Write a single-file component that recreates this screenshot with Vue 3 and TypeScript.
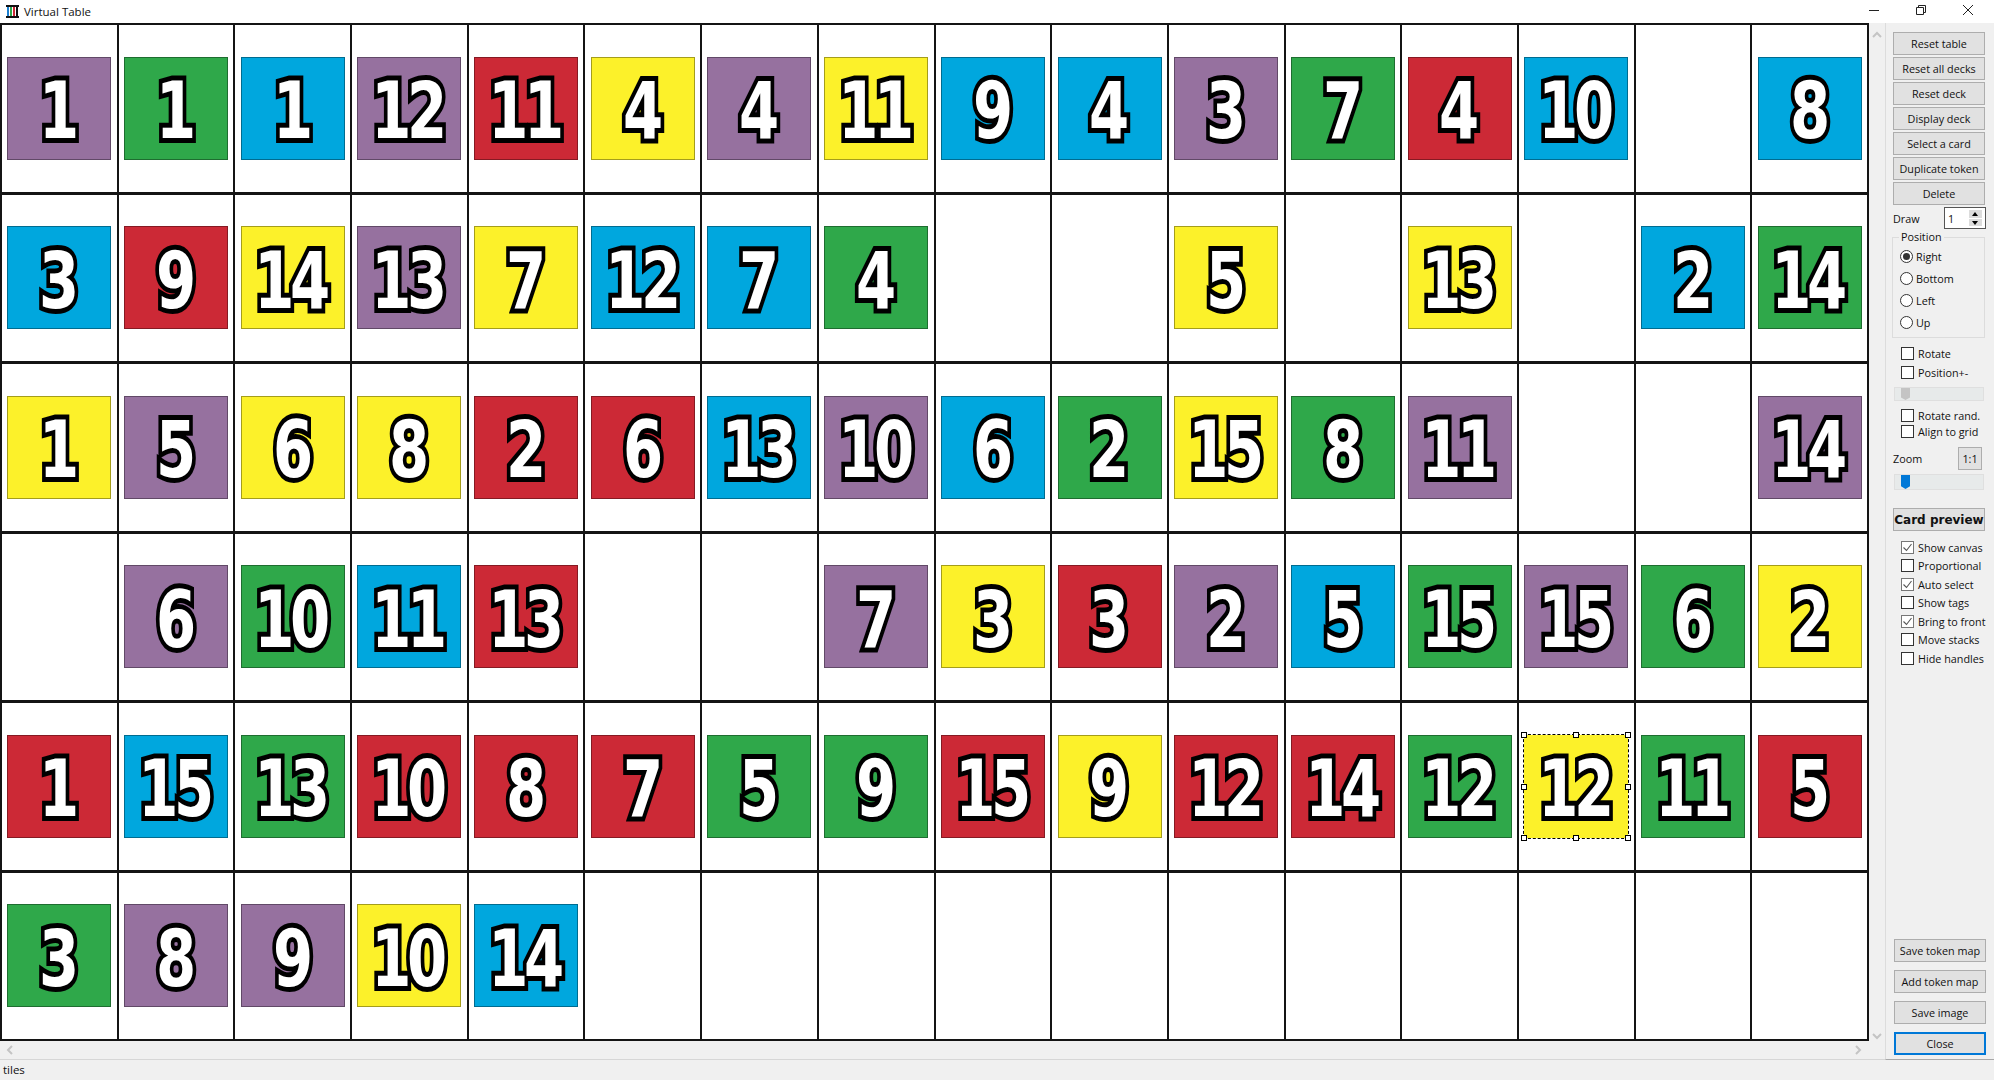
<script setup lang="ts">
type Tile = { c: string; n: number; selected?: boolean } | null

const layout = [
  'p1 g1 b1 p12 r11 y4 p4 y11 b9 b4 p3 g7 r4 b10 _ b8',
  'b3 r9 y14 p13 y7 b12 b7 g4 _ _ y5 _ y13 _ b2 g14',
  'y1 p5 y6 y8 r2 r6 b13 p10 b6 g2 y15 g8 p11 _ _ p14',
  '_ p6 g10 b11 r13 _ _ p7 y3 r3 p2 b5 g15 p15 g6 y2',
  'r1 b15 g13 r10 r8 r7 g5 g9 r15 y9 r12 r14 g12 y12* g11 r5',
  'g3 p8 p9 y10 b14 _ _ _ _ _ _ _ _ _ _ _',
]

const cells: Tile[] = layout.flatMap((row) =>
  row.split(' ').map((t) =>
    t === '_' ? null : { c: t[0], n: parseInt(t.slice(1), 10), selected: t.endsWith('*') },
  ),
)

const handles = ['tl', 'tc', 'tr', 'ml', 'mr', 'bl', 'bc', 'br']
const topButtons = ['Reset table', 'Reset all decks', 'Reset deck', 'Display deck', 'Select a card', 'Duplicate token', 'Delete']
const radios = ['Right', 'Bottom', 'Left', 'Up']
const options = [
  { label: 'Show canvas', on: true },
  { label: 'Proportional', on: false },
  { label: 'Auto select', on: true },
  { label: 'Show tags', on: false },
  { label: 'Bring to front', on: true },
  { label: 'Move stacks', on: false },
  { label: 'Hide handles', on: false },
]
const bottomButtons = ['Save token map', 'Add token map', 'Save image']
</script>

<template>
  <div class="window">
    <header class="titlebar">
      <svg class="app-icon" width="13" height="15" viewBox="0 0 13 15">
        <rect x="0" y="1" width="13" height="2" fill="#111" />
        <rect x="0" y="12" width="13" height="2" fill="#111" />
        <rect x="1" y="3" width="2" height="9" fill="#1a7fd0" />
        <rect x="4" y="3" width="2" height="9" fill="#2fa84a" />
        <rect x="7" y="3" width="2" height="9" fill="#cc2936" />
        <rect x="10" y="3" width="2" height="9" fill="#111" />
      </svg>
      <span class="title">Virtual Table</span>
      <div class="win-controls">
        <svg width="12" height="12" viewBox="0 0 12 12"><path d="M1 6.5h10" stroke="#222" fill="none" /></svg>
        <svg width="12" height="12" viewBox="0 0 12 12"><path d="M1.5 3.5h7v7h-7zM3.5 3.5v-2h7v7h-2" stroke="#222" fill="none" /></svg>
        <svg width="12" height="12" viewBox="0 0 12 12"><path d="M1 1l10 10M11 1L1 11" stroke="#222" fill="none" /></svg>
      </div>
    </header>

    <div class="body">
      <div class="work">
        <div class="work-top">
          <div class="board">
            <div v-for="(cell, i) in cells" :key="i" class="cell">
              <div v-if="cell" class="tile" :class="['c-' + cell.c, { selected: cell.selected }]">
                <span class="num">{{ cell.n }}</span>
                <template v-if="cell.selected">
                  <i v-for="h in handles" :key="h" class="handle" :class="h"></i>
                </template>
              </div>
            </div>
          </div>
          <div class="vscroll">
            <svg width="10" height="7" viewBox="0 0 10 7"><path d="M1 6l4-4 4 4" stroke="#c4c4c4" stroke-width="2" fill="none" /></svg>
            <svg width="10" height="7" viewBox="0 0 10 7"><path d="M1 1l4 4 4-4" stroke="#c4c4c4" stroke-width="2" fill="none" /></svg>
          </div>
        </div>
        <div class="hscroll">
          <svg width="7" height="10" viewBox="0 0 7 10"><path d="M6 1L2 5l4 4" stroke="#c4c4c4" stroke-width="2" fill="none" /></svg>
          <svg width="7" height="10" viewBox="0 0 7 10"><path d="M1 1l4 4-4 4" stroke="#c4c4c4" stroke-width="2" fill="none" /></svg>
        </div>
      </div>

      <aside class="panel">
        <div class="btn-stack">
          <button v-for="b in topButtons" :key="b" class="btn">{{ b }}</button>
        </div>

        <div class="draw-row">
          <span>Draw</span>
          <div class="spin">
            <span>1</span>
            <div class="spin-arrows">
              <i class="arrow up"></i>
              <i class="arrow down"></i>
            </div>
          </div>
        </div>

        <fieldset class="group">
          <legend>Position</legend>
          <label v-for="(r, i) in radios" :key="r" class="radio-row">
            <i class="radio" :class="{ on: i === 0 }"></i>{{ r }}
          </label>
        </fieldset>

        <div class="checks first">
          <label class="check-row"><i class="check"></i>Rotate</label>
          <label class="check-row"><i class="check"></i>Position+-</label>
        </div>

        <div class="slider"><i class="thumb gray"></i></div>

        <div class="checks tight">
          <label class="check-row"><i class="check"></i>Rotate rand.</label>
          <label class="check-row"><i class="check"></i>Align to grid</label>
        </div>

        <div class="zoom-row">
          <span>Zoom</span>
          <button class="btn one">1:1</button>
        </div>
        <div class="slider zoom"><i class="thumb blue"></i></div>

        <button class="btn preview">Card preview</button>

        <div class="checks options">
          <label v-for="o in options" :key="o.label" class="check-row">
            <i class="check" :class="{ on: o.on }">
              <svg v-if="o.on" width="11" height="11" viewBox="0 0 11 11"><path d="M1.5 5.5l3 3 5-6.5" stroke="#555" stroke-width="1.1" fill="none" /></svg>
            </i>{{ o.label }}
          </label>
        </div>

        <div class="bottom">
          <button v-for="b in bottomButtons" :key="b" class="btn">{{ b }}</button>
          <button class="btn focus">Close</button>
        </div>
      </aside>
    </div>

    <footer class="status">tiles</footer>
  </div>
</template>

<style scoped>
.window {
  width: 1994px;
  height: 1080px;
  display: flex;
  flex-direction: column;
  background: #f0f0f0;
  font-family: "Open Sans", "Noto Sans", sans-serif;
  font-size: 10.8px;
  color: #111;
  overflow: hidden;
}
.titlebar {
  height: 23px;
  flex: none;
  background: #fff;
  display: flex;
  align-items: center;
  padding-left: 6px;
}
.title {
  margin-left: 5px;
  font-size: 11.5px;
}
.win-controls {
  margin-left: auto;
  width: 126px;
  margin-top: -4px;
  display: flex;
  justify-content: space-between;
  padding-right: 20px;
  box-sizing: border-box;
}
.body {
  flex: 1;
  min-height: 0;
  display: flex;
}
.work {
  flex: 1;
  min-width: 0;
  display: flex;
  flex-direction: column;
}
.work-top {
  flex: 1;
  min-height: 0;
  display: flex;
}
.board {
  width: 1869px;
  height: 1018px;
  flex: none;
  box-sizing: border-box;
  display: grid;
  grid-template-columns: repeat(16, 1fr);
  grid-template-rows: repeat(6, 1fr);
  gap: 3px 2px;
  padding: 2px;
  background: #141414;
}
.cell {
  background: #fff;
  display: flex;
  align-items: center;
  justify-content: center;
  min-width: 0;
  min-height: 0;
}
.tile {
  position: relative;
  width: 104px;
  height: 103px;
  box-sizing: border-box;
  border: 1px solid rgba(0, 0, 0, 0.35);
  display: flex;
  align-items: center;
  justify-content: center;
  overflow: visible;
}
.c-p { background: #96719f; }
.c-g { background: #2fa84a; }
.c-b { background: #00a7de; }
.c-r { background: #cc2936; }
.c-y { background: #fcf12a; }
.num {
  display: inline-block;
  font-family: "DejaVu Sans", sans-serif;
  font-weight: 700;
  font-size: 78px;
  line-height: 1;
  color: #fff;
  -webkit-text-stroke: 10px #000;
  paint-order: stroke fill;
  transform: scaleX(0.74);
  letter-spacing: -6px;
  text-indent: -6px;
  margin-top: 6px;
}
.tile.selected {
  border: 0;
  outline: 1px dashed #000;
}
.handle {
  position: absolute;
  width: 6px;
  height: 6px;
  box-sizing: border-box;
  background: #fff;
  border: 1px solid #000;
}
.tl, .ml, .bl { left: -3px; }
.tr, .mr, .br { right: -3px; }
.tc, .bc { left: 49px; }
.tl, .tc, .tr { top: -3px; }
.bl, .bc, .br { bottom: -3px; }
.ml, .mr { top: 49px; }

.vscroll {
  flex: 1;
  padding: 8px 0 20px;
  display: flex;
  flex-direction: column;
  align-items: center;
  justify-content: space-between;
  box-sizing: border-box;
  height: 1037px;
}
.hscroll {
  height: 18px;
  flex: none;
  display: flex;
  align-items: center;
  justify-content: space-between;
  padding: 0 23px 0 6px;
  border-bottom: 1px solid #d6d6d6;
}
.panel {
  width: 109px;
  flex: none;
  box-sizing: border-box;
  border-left: 1px solid #dcdcdc;
  border-bottom: 1px solid #a8a8a8;
  padding: 9px 8px 4px 7px;
  display: flex;
  flex-direction: column;
}
.btn {
  display: block;
  width: 92px;
  height: 23px;
  padding: 0;
  box-sizing: border-box;
  background: #e1e1e1;
  border: 1px solid #adadad;
  border-radius: 0;
  font: inherit;
  color: #111;
  text-align: center;
}
.btn-stack {
  display: flex;
  flex-direction: column;
  gap: 2px;
}
.draw-row {
  margin-top: 2px;
  height: 22px;
  width: 93px;
  display: flex;
  align-items: center;
  justify-content: space-between;
}
.spin {
  width: 42px;
  height: 22px;
  box-sizing: border-box;
  border: 1px solid #555;
  background: #fff;
  display: flex;
  align-items: center;
  justify-content: space-between;
  padding: 0 3px 0 3px;
}
.spin-arrows {
  width: 13px;
  height: 16px;
  display: flex;
  flex-direction: column;
  gap: 1px;
}
.arrow {
  flex: 1;
  background: #dcdcdc;
  position: relative;
}
.arrow::after {
  content: "";
  position: absolute;
  left: 3px;
  border-left: 3.5px solid transparent;
  border-right: 3.5px solid transparent;
}
.arrow.up::after {
  top: 2px;
  border-bottom: 4px solid #000;
}
.arrow.down::after {
  top: 2px;
  border-top: 4px solid #000;
}
.group {
  margin: 2px 0 0 -1px;
  padding: 2px 0 0 7px;
  width: 93px;
  height: 107px;
  box-sizing: border-box;
  border: 1px solid #dcdcdc;
  min-width: 0;
  display: flex;
  flex-direction: column;
}
.group legend {
  padding: 0 2px;
  margin-left: -1px;
  font-size: 10.8px;
  line-height: 12px;
}
.radio-row {
  height: 22px;
  display: flex;
  align-items: center;
  gap: 3px;
}
.radio {
  width: 13px;
  height: 13px;
  flex: none;
  box-sizing: border-box;
  border: 1px solid #333;
  border-radius: 50%;
  background: #fff;
  position: relative;
}
.radio.on::after {
  content: "";
  position: absolute;
  inset: 2px;
  border-radius: 50%;
  background: #333;
}
.checks {
  display: flex;
  flex-direction: column;
  padding-left: 8px;
}
.checks.first {
  margin-top: 7px;
  gap: 3px;
}
.checks.tight {
  margin-top: 6px;
}
.checks.options {
  margin-top: 8px;
  gap: 2.5px;
}
.check-row {
  height: 16px;
  display: flex;
  align-items: center;
  gap: 4px;
  white-space: nowrap;
}
.check {
  width: 13px;
  height: 13px;
  flex: none;
  box-sizing: border-box;
  border: 1px solid #333;
  background: #fff;
  display: flex;
  align-items: center;
  justify-content: center;
}
.check.on {
  border-color: #777;
}
.slider {
  margin-top: 7px;
  width: 90px;
  height: 14px;
  margin-left: 1px;
  background: #e7eaea;
  border: 1px solid #dfdfdf;
  box-sizing: border-box;
  position: relative;
}
.thumb {
  position: absolute;
  left: 6px;
  top: 0;
  width: 9px;
  height: 100%;
  clip-path: polygon(0 0, 100% 0, 100% 80%, 50% 100%, 0 80%);
}
.thumb.gray { background: #c4c4c4; }
.thumb.blue { background: #0078d7; }
.zoom-row {
  margin-top: 8px;
  height: 23px;
  width: 89px;
  display: flex;
  align-items: center;
  justify-content: space-between;
}
.btn.one {
  width: 24px;
  height: 23px;
}
.slider.zoom {
  margin-top: 4px;
  height: 16px;
}
.btn.preview {
  margin-top: 18px;
  font-family: "DejaVu Sans", sans-serif;
  font-weight: 700;
  font-size: 12px;
}
.bottom {
  margin-top: auto;
  display: flex;
  flex-direction: column;
  gap: 8px;
  padding-left: 1px;
}
.btn.focus {
  border: 2px solid #0078d7;
}
.status {
  height: 20px;
  flex: none;
  padding: 0 0 2px 3px;
  box-sizing: border-box;
  display: flex;
  align-items: center;
  font-size: 11.5px;
}
</style>
